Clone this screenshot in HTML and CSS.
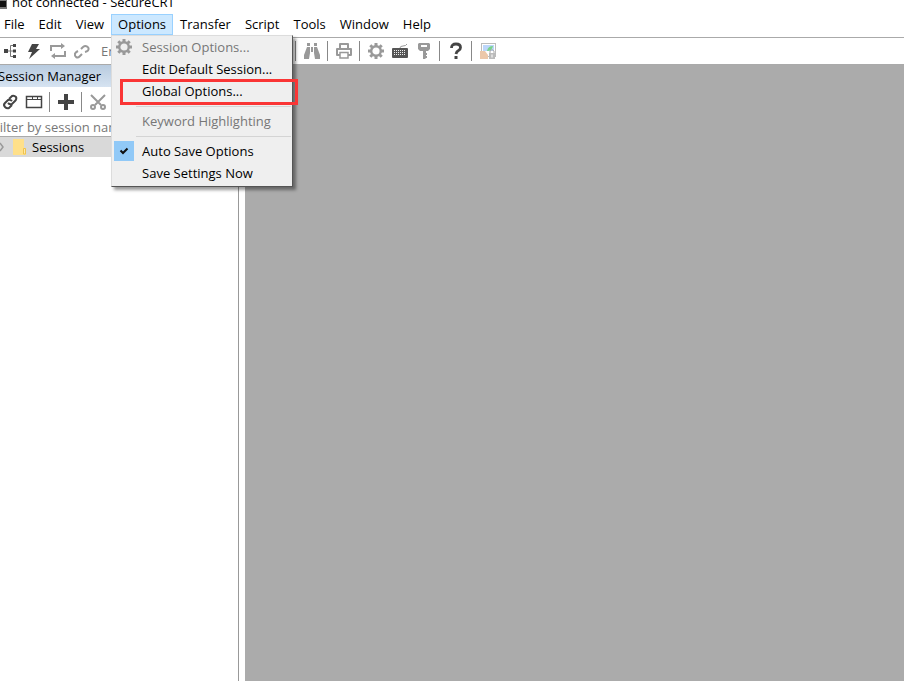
FILE: index.html
```html
<!DOCTYPE html>
<html lang="en">
<head>
<meta charset="utf-8">
<title>not connected - SecureCRT</title>
<link rel="stylesheet" href="styles.css">
</head>
<body>
<div class="app">
  <header class="titlebar"><svg class="app-icon" width="7" height="10" viewBox="0 0 7 10"><path d="M0 0h7v9H0z" fill="#777"/><path d="M0 1h6v6H0z" fill="#111"/></svg><span>not connected - SecureCRT</span></header>
  <nav class="menubar" aria-label="Main menu">
    <button class="menu-title">File</button>
    <button class="menu-title">Edit</button>
    <button class="menu-title">View</button>
    <div class="menu-holder">
      <button class="menu-title open" aria-expanded="true">Options</button>
      <div class="menu" role="menu">
        <button class="item" role="menuitem" disabled><span class="mark"><svg width="18" height="18" viewBox="0 0 18 18" fill="none" stroke="#999"><circle cx="9" cy="9" r="4.800" stroke-width="2.400"/><path d="M9 1v3M9 14v3M1 9h3M14 9h3M3.300 3.300l2 2M12.700 12.700l2 2M14.700 3.300l-2 2M5.300 12.700l-2 2" stroke-width="3"/></svg></span>Session Options...</button>
        <button class="item" role="menuitem"><span class="mark"></span>Edit Default Session...</button>
        <button class="item framed" role="menuitem"><span class="mark"></span>Global Options...</button>
        <hr class="rule">
        <button class="item" role="menuitem" disabled><span class="mark"></span>Keyword Highlighting</button>
        <hr class="rule">
        <button class="item" role="menuitemcheckbox" aria-checked="true"><span class="mark checked"><svg width="10" height="8" viewBox="0 0 10 8"><path d="M1.500 3.500l2.500 2.500L8.500 1.500" fill="none" stroke="#111" stroke-width="2"/></svg></span>Auto Save Options</button>
        <button class="item" role="menuitem"><span class="mark"></span>Save Settings Now</button>
      </div>
    </div>
    <button class="menu-title">Transfer</button>
    <button class="menu-title">Script</button>
    <button class="menu-title">Tools</button>
    <button class="menu-title">Window</button>
    <button class="menu-title">Help</button>
  </nav>
  <div class="toolbar" role="toolbar" aria-label="Main toolbar">
    <button class="tool" aria-label="Session Manager"><svg width="18" height="18" viewBox="0 0 18 18"><path d="M3 7h4v4H3zM12 2h3v3h-3zM12 7.500h3v3h-3zM12 13h3v3h-3z" fill="#444"/><path d="M7 9h5M12 3.500H9.500v11H12" fill="none" stroke="#777"/></svg></button>
    <button class="tool" aria-label="Quick Connect"><svg width="18" height="18" viewBox="0 0 18 18"><path d="M7 2h7l-3 5h4L4 17l3-7H3z" fill="#444"/></svg></button>
    <button class="tool" aria-label="Reconnect"><svg width="18" height="18" viewBox="0 0 18 18"><path d="M2 9V4h12M16 9v5H4" fill="none" stroke="#999" stroke-width="2"/><path d="M12 1l4 3-4 3zM6 11l-4 3 4 3z" fill="#999"/></svg></button>
    <button class="tool" aria-label="Disconnect"><svg width="18" height="18" viewBox="0 0 18 18" fill="none" stroke="#999" stroke-width="2"><path d="M8 7l2-2q2-1.500 4-.5 2.500 1.500 1 4-1 1-3 1.500M5 9q-2 1-3 2.500-.5 2.500 1 3.500 2 1 3.500-.5L9 12"/></svg></button>
    <input class="host" aria-label="Host" placeholder="Enter host &lt;Alt+R&gt;">
    <span class="sep"></span>
    <button class="tool" aria-label="Find"><svg width="18" height="18" viewBox="0 0 18 18" fill="#999"><path d="M4 1h3v3H4zM11 1h3v3h-3zM4 5h3v6l-1 6H1V13zM11 5h3l3 8v4h-5l-1-6zM8 5h2v5H8z"/></svg></button>
    <span class="sep"></span>
    <button class="tool" aria-label="Print"><svg width="18" height="18" viewBox="0 0 18 18" fill="none" stroke="#999"><path d="M5 6V2h8v4M5 13H2V7h14v6h-3" stroke-width="2" stroke-linejoin="round"/><path d="M5 10.500h8v5.500H5z" stroke-width="1.500"/></svg></button>
    <span class="sep"></span>
    <button class="tool" aria-label="Session options"><svg width="18" height="18" viewBox="0 0 18 18" fill="none" stroke="#999"><circle cx="9" cy="9" r="4.800" stroke-width="2.400"/><path d="M9 1v3M9 14v3M1 9h3M14 9h3M3.300 3.300l2 2M12.700 12.700l2 2M14.700 3.300l-2 2M5.300 12.700l-2 2" stroke-width="3"/></svg></button>
    <button class="tool" aria-label="Keymap"><svg width="18" height="18" viewBox="0 0 18 18"><path d="M9 6q0-2 3-2t4-2" fill="none" stroke="#999"/><rect x="1" y="6" width="16" height="10" rx="1" fill="#555"/><path d="M3 8.500h12M3 10.500h12M3 12.500h12" stroke="#eee" stroke-dasharray="1 1"/></svg></button>
    <button class="tool" aria-label="Public key"><svg width="18" height="18" viewBox="0 0 18 18"><path fill-rule="evenodd" d="M4 1h10l1 1v5l-2 2h-2v2h1v2h-1v1h1v2h-1l-1 1H8V9H5L3 7V2zM6 3v2h6V3z" fill="#999"/></svg></button>
    <span class="sep"></span>
    <button class="tool" aria-label="Help"><svg width="18" height="18" viewBox="0 0 18 18"><path d="M4.500 6q0-4 4.500-4t4.500 3.500q0 2-2 3T9 12" fill="none" stroke="#444" stroke-width="2.800"/><path d="M7.500 14h3v3h-3z" fill="#444"/></svg></button>
    <span class="sep"></span>
    <button class="tool" aria-label="Lock session"><svg width="18" height="18" viewBox="0 0 18 18"><rect x="2.500" y="1.500" width="14" height="13" fill="#fff" stroke="#bbb"/><path d="M4 3h11v6H4z" fill="#bcd6fa"/><path d="M8 9q1-5 6-5-1 5-6 5" fill="#79d28b"/><path d="M1 9h5l3 4v4H1z" fill="#ecc8aa"/><path d="M11 11V9q2-3 4 0v2" fill="none" stroke="#aaa"/><path d="M10 11h6v6h-6z" fill="#bbb"/><path d="M12.500 12.500h1v3h-1z" fill="#fff"/></svg></button>
  </div>
  <div class="workspace">
    <aside class="manager">
      <h2 class="manager-title">Session Manager</h2>
      <div class="manager-tools">
        <button class="tool" aria-label="Connect"><svg width="18" height="18" viewBox="0 0 18 18" fill="none" stroke="#444" stroke-width="2"><path d="M8 6l3-3q2-1 4 1 1 2-1 4l-3 3q-2 1-4-1M11 8q-2-2-4-1l-3 3q-2 2 0 4 2 2 4 1l3-3"/></svg></button>
        <button class="tool" aria-label="Connect in tab"><svg width="18" height="18" viewBox="0 0 18 18" fill="none" stroke="#444"><path d="M1.500 3.500h15v11h-15z" stroke-width="1.500"/><path d="M2 6.500h14M7.500 3v3M12.500 3v3"/></svg></button>
        <span class="sep"></span>
        <button class="tool" aria-label="New session"><svg width="18" height="18" viewBox="0 0 18 18"><path d="M7 1h4v6h6v4h-6v6H7v-6H1V7h6z" fill="#444"/></svg></button>
        <span class="sep"></span>
        <button class="tool" aria-label="Cut"><svg width="18" height="18" viewBox="0 0 18 18" fill="none" stroke="#999" stroke-width="2"><path d="M2 2l10 10M16 2L6 12"/><circle cx="4" cy="14" r="2"/><circle cx="14" cy="14" r="2"/></svg></button>
      </div>
      <input class="filter" aria-label="Filter" placeholder="Filter by session name &lt;Alt+I&gt;">
      <div class="tree"><button class="node"><svg width="8" height="10" viewBox="0 0 8 10"><path d="M0 1l3 4-3 4" fill="none" stroke="#999" stroke-width="1.500"/></svg><svg width="14" height="16" viewBox="0 0 14 16"><path d="M0 0h11v9h2v7H0z" fill="#ffe08a"/><path d="M10.500 9.500h2v5.500h-2z" fill="#ffe9a8" stroke="#efc34f"/></svg><span>Sessions</span></button></div>
    </aside>
    <main class="desktop"></main>
  </div>
</div>
</body>
</html>
```

FILE: styles.css
```css
* { box-sizing: border-box; }
body { margin: 0; background: #fff; color: #000; font: 13px/20px "Open Sans", sans-serif; }
button { border: 0; margin: 0; padding: 0; background: none; color: inherit; font: inherit; text-align: left; white-space: nowrap; }
input { border: 0; margin: 0; padding: 0; background: none; font: inherit; min-width: 0; }
input::placeholder { color: #777; opacity: 1; }
svg { display: block; flex: none; }
.app { height: 100vh; overflow: hidden; display: flex; flex-direction: column; }
.titlebar { display: flex; align-items: flex-end; gap: 5px; height: 12px; flex: none; white-space: nowrap; }
.app-icon { align-self: flex-start; }
.titlebar span { line-height: 20px; }
.menubar { display: flex; height: 25px; margin-left: -3px; padding-top: 2px; flex: none; }
.menu-title { height: 21px; padding: 0 7px 2px; }
.menu-holder { position: relative; }
.open { background: #cce8ff; box-shadow: inset 0 0 0 1px #99d1ff; }
.menu { position: absolute; z-index: 2; top: 21px; left: 0; width: 182px; padding: 0 0 2px; background: #efefef; border: 1px solid #dcdcdc; border-right-color: #555; border-bottom-color: #555; box-shadow: 3px 3px 3px #0006; }
.item { position: relative; display: flex; align-items: center; width: 100%; height: 22px; }
.item:disabled { color: #777; }
.mark { display: grid; place-items: center; width: 20px; height: 20px; margin: 0 8px 0 2px; flex: none; }
.checked { background: #91c9f7; }
.framed::after { content: ""; position: absolute; inset: -1px -6px -3px 8px; border: 3px solid #fa3535; }
.rule { height: 1px; margin: 4px 1px 3px 24px; border: 0; background: #d4d4d4; }
.toolbar { display: flex; align-items: center; height: 28px; padding-left: 1px; flex: none; border-top: 1px solid #aaa; border-bottom: 1px solid #aaa; gap: 6px; }
.tool { flex: none; }
.sep { width: 1px; height: 20px; margin-right: 1px; background: #888; flex: none; }
.host { width: 192px; padding-left: 4px; }
.workspace { display: flex; flex: 1; min-height: 0; }
.manager { width: 239px; border-right: 1px solid #999; flex: none; overflow: hidden; }
.manager-title { margin: 0; height: 22px; font: inherit; line-height: 22px; text-indent: -2px; background: linear-gradient(#b8cbdf, #d6e3f1); }
.manager-tools { display: flex; align-items: center; gap: 6px; height: 29px; padding: 1px 0 0 1px; }
.filter { display: block; width: 100%; height: 21px; border: solid #aaa; border-width: 1px 0; text-indent: -7px; }
.tree { background: #d9d9d9; }
.node { display: flex; align-items: center; gap: 5px; height: 20px; }
.desktop { flex: 1; margin-left: 6px; background: #ababab; }
```
